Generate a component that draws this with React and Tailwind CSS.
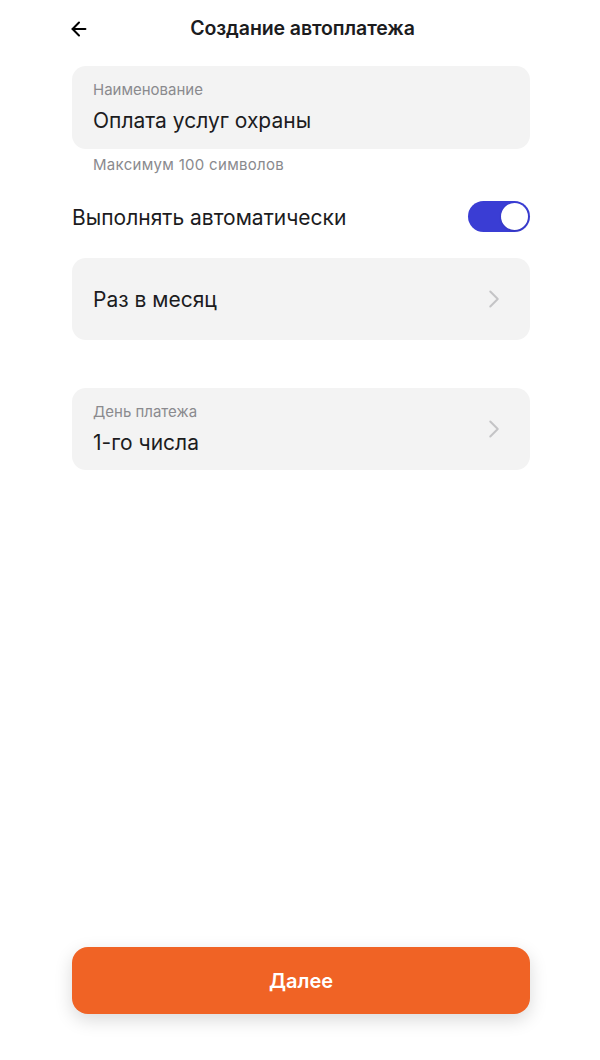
import { ArrowLeft, ChevronRight } from "lucide-react";

export default function App() {
  return (
    <div
      className="w-[600px] h-[1060px] bg-white flex flex-col pl-[72px] pr-[70px] text-[#1c1c1e]"
      style={{ fontFamily: "Inter, 'Noto Sans', sans-serif" }}
    >
      {/* header */}
      <div className="relative h-[58px] flex items-center justify-center">
        <button className="absolute left-[-6px] top-[16px] p-0.5">
          <ArrowLeft className="w-[22px] h-[22px] text-black" strokeWidth={2.2} />
        </button>
        <h1 className="text-[19.5px] font-semibold tracking-[-0.1px] ml-[3px]">Создание автоплатежа</h1>
      </div>

      {/* name field */}
      <div className="mt-2 h-[83px] rounded-[14px] bg-[#f3f3f3] px-[21px] pt-[14px]">
        <p className="text-[15px] leading-5 text-[#8a8a8e]">Наименование</p>
        <p className="mt-[7px] text-[21px] leading-7">Оплата услуг охраны</p>
      </div>
      <p className="mt-[6px] pl-[21px] text-[15px] tracking-[0.3px] leading-5 text-[#8a8a8e]">Максимум 100 символов</p>

      {/* auto toggle */}
      <div className="mt-[26px] h-[31px] flex items-center justify-between">
        <span className="text-[21px] leading-7 mt-[3px]">Выполнять автоматически</span>
        <div className="w-[62px] h-[31px] rounded-full bg-[#3a3dd4] flex items-center justify-end pr-[2px]">
          <div className="w-[27px] h-[27px] rounded-full bg-white shadow-sm" />
        </div>
      </div>

      {/* period */}
      <div className="mt-[26px] h-[82px] rounded-[14px] bg-[#f3f3f3] pl-[21px] pr-[21px] flex items-center justify-between">
        <span className="text-[21px] leading-7 mt-[2px]">Раз в месяц</span>
        <ChevronRight className="w-[30px] h-[30px] text-[#c4c4c6]" strokeWidth={1.6} />
      </div>

      {/* day */}
      <div className="mt-[48px] h-[82px] rounded-[14px] bg-[#f3f3f3] pl-[21px] pr-[21px] flex items-center justify-between">
        <div className="self-start pt-[14px]">
          <p className="text-[15px] leading-5 text-[#8a8a8e]">День платежа</p>
          <p className="mt-[7px] text-[21px] leading-7">1-го числа</p>
        </div>
        <ChevronRight className="w-[30px] h-[30px] text-[#c4c4c6]" strokeWidth={1.6} />
      </div>

      <div className="flex-1" />

      <button className="mb-[46px] h-[67px] w-full rounded-[16px] bg-[#f06325] text-white text-[20px] font-semibold shadow-[0_6px_18px_rgba(0,0,0,0.15)]">
        Далее
      </button>
    </div>
  );
}
